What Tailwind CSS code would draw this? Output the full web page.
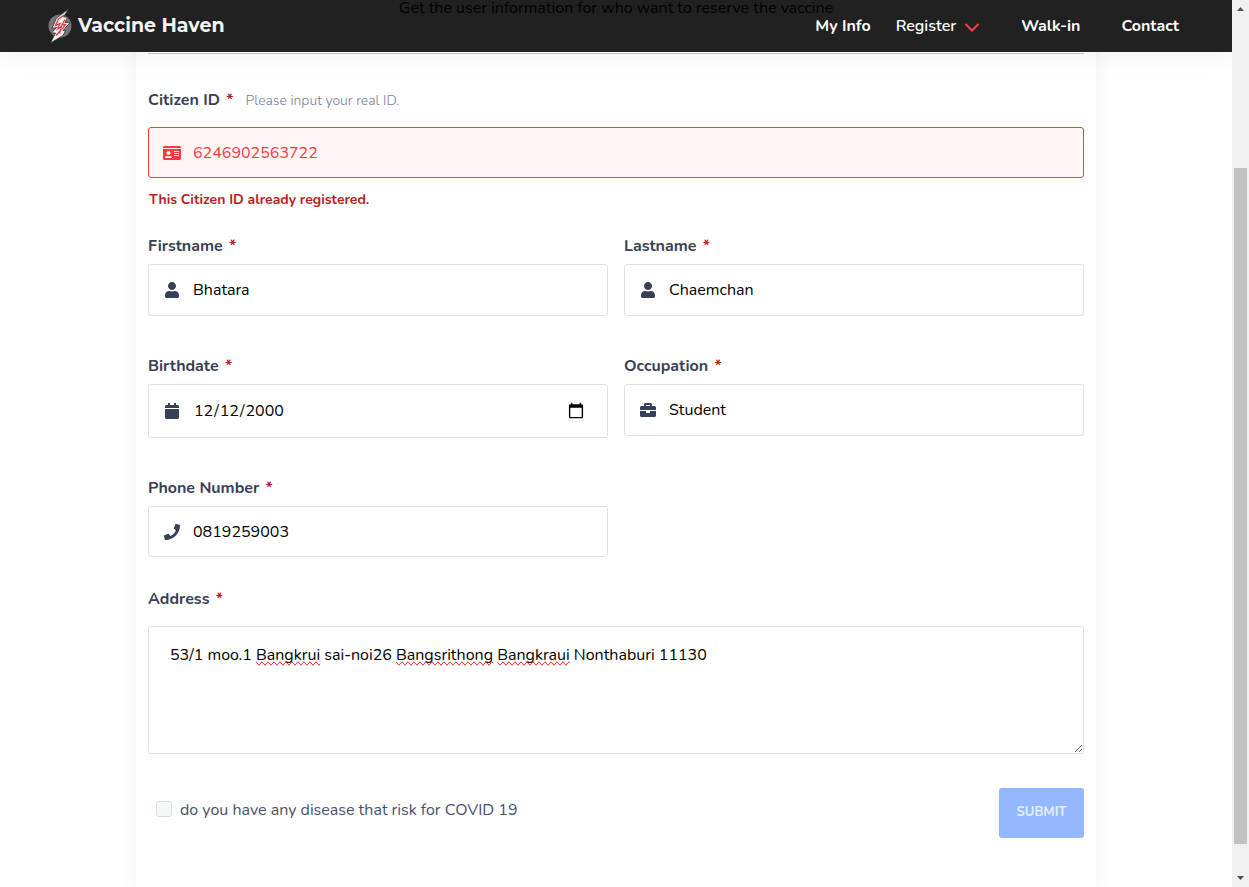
<!DOCTYPE html>
<html lang="en">
<head>
<meta charset="utf-8">
<meta name="viewport" content="width=device-width, initial-scale=1">
<title>Vaccine Haven</title>
<script src="https://cdn.jsdelivr.net/npm/@tailwindcss/browser@4"></script>
</head>
<body class="flex h-screen overflow-hidden bg-white font-[Nunito,'Open_Sans',sans-serif] text-base text-[#374056]">
<div class="relative min-w-0 flex-1 overflow-hidden">
  <header class="absolute inset-x-0 top-0 z-10 flex h-[52px] items-center justify-between bg-black/87 pl-12 pr-[53px] text-white shadow-[0_4px_24px_rgba(0,0,0,0.06)]">
    <a href="#" class="flex items-center gap-1.5 font-[Montserrat,'Open_Sans',sans-serif] text-[19px] font-bold text-[#f3f3f3]">
      <svg class="h-9 w-6" viewBox="0 0 24 36" aria-hidden="true">
        <circle cx="12" cy="18" r="11.5" fill="#777"/>
        <path d="M20.500 1 8.500 10 4 20.500 8.500 19.500 3.500 25 7.500 25 2.500 35 15 27.500 17.500 22.500 15 22.500 22 14.500 17 14.500 19.500 9 15.500 9Z" fill="#f0f0f0" stroke="#333" stroke-width=".8"/>
        <path d="M16 7 10.500 11 7.500 17.500 12 15.500 9.500 21 13.500 18.500 11.500 25.500M17 11.500 14 17 17.500 16.500 14 21.500M8 27.500 12.500 22.500" fill="none" stroke="#e23b48" stroke-width="1.300"/>
      </svg>
      <span>Vaccine Haven</span>
    </a>
    <nav class="flex items-center font-bold" aria-label="Main">
      <a href="#">My Info</a>
      <button type="button" class="ml-[25px] flex items-center gap-2 font-semibold">Register
        <svg class="mt-0.5 h-4 w-4" viewBox="0 0 16 16" fill="none" stroke="#f43f52" stroke-width="2" aria-hidden="true"><path d="M1.500 5 8 11.500 14.500 5"/></svg>
      </button>
      <a href="#" class="ml-[41px]">Walk-in</a>
      <a href="#" class="ml-[41px]">Contact</a>
    </nav>
  </header>
  <main class="mx-auto min-h-screen max-w-[960px] bg-white px-3 shadow-[0_0_20px_rgba(0,0,0,0.06)]">
    <p class="text-center leading-4 text-black">Get the user information for who want to reserve the vaccine</p>
    <hr class="mt-[37px] border-[#ccc]">
    <form class="pt-[34px]">
      <div class="flex items-center">
        <label for="cid" class="font-bold">Citizen ID <span class="ml-0.5 text-[#b91c1c]">*</span></label>
        <span class="ml-3 pt-0.5 text-sm font-light text-[#718096]">Please input your real ID.</span>
      </div>
      <div class="relative mt-[15px]">
        <svg class="absolute left-[15px] top-[18px] h-4 w-[18px]" viewBox="0 0 576 512" fill="#f93b3f" aria-hidden="true"><path d="M528 32H48C21.500 32 0 53.500 0 80v16h576V80c0-26.500-21.500-48-48-48zM0 432c0 26.500 21.500 48 48 48h480c26.500 0 48-21.500 48-48V128H0v304zm352-232c0-4.400 3.600-8 8-8h144c4.400 0 8 3.600 8 8v16c0 4.400-3.600 8-8 8H360c-4.400 0-8-3.600-8-8v-16zm0 64c0-4.400 3.600-8 8-8h144c4.400 0 8 3.600 8 8v16c0 4.400-3.600 8-8 8H360c-4.400 0-8-3.600-8-8v-16zm0 64c0-4.400 3.600-8 8-8h144c4.400 0 8 3.600 8 8v16c0 4.400-3.600 8-8 8H360c-4.400 0-8-3.600-8-8v-16zM176 192c35.300 0 64 28.700 64 64s-28.700 64-64 64-64-28.700-64-64 28.700-64 64-64zM67.100 396.200C75.500 370.500 99.600 352 128 352h8.200c12.300 5.100 25.700 8 39.800 8s27.600-2.900 39.800-8h8.200c28.400 0 52.500 18.500 60.900 44.200 3.200 9.900-5.200 19.800-15.600 19.800H82.700c-10.400 0-18.800-10-15.600-19.800z"/></svg>
        <input id="cid" type="text" value="6246902563722" aria-invalid="true" aria-describedby="cid-error" class="block h-[51px] w-full rounded-[3px] border border-[#f93b3f] bg-[#fff5f5] pl-11 pr-4 text-[#f93b3f]">
      </div>
      <p id="cid-error" class="ml-px mt-3 text-sm font-bold text-[#b91c1c]">This Citizen ID already registered.</p>

      <div class="mt-6 grid grid-cols-2 items-start gap-x-4">
        <div>
          <label for="first" class="block font-bold">Firstname <span class="ml-0.5 text-[#b91c1c]">*</span></label>
          <div class="relative mt-1.5">
            <svg class="absolute left-4 top-[18px] h-4 w-4" viewBox="0 0 448 512" fill="#374056" aria-hidden="true"><path d="M224 256c70.700 0 128-57.300 128-128S294.700 0 224 0 96 57.300 96 128s57.300 128 128 128zm89.600 32h-16.700c-22.200 10.200-46.900 16-72.900 16s-50.600-5.800-72.900-16h-16.700C60.200 288 0 348.200 0 422.400V464c0 26.500 21.500 48 48 48h352c26.500 0 48-21.500 48-48v-41.600c0-74.200-60.200-134.400-134.400-134.400z"/></svg>
            <input id="first" type="text" value="Bhatara" class="block h-[52px] w-full rounded-[3px] border border-[#dfe0e6] bg-white pl-11 pr-4 text-black">
          </div>
        </div>
        <div>
          <label for="last" class="block font-bold">Lastname <span class="ml-0.5 text-[#b91c1c]">*</span></label>
          <div class="relative mt-1.5">
            <svg class="absolute left-4 top-[18px] h-4 w-4" viewBox="0 0 448 512" fill="#374056" aria-hidden="true"><path d="M224 256c70.700 0 128-57.300 128-128S294.700 0 224 0 96 57.300 96 128s57.300 128 128 128zm89.600 32h-16.700c-22.200 10.200-46.900 16-72.900 16s-50.600-5.800-72.900-16h-16.700C60.200 288 0 348.200 0 422.400V464c0 26.500 21.500 48 48 48h352c26.500 0 48-21.500 48-48v-41.600c0-74.200-60.200-134.400-134.400-134.400z"/></svg>
            <input id="last" type="text" value="Chaemchan" class="block h-[52px] w-full rounded-[3px] border border-[#dfe0e6] bg-white pl-11 pr-4 text-black">
          </div>
        </div>
      </div>

      <div class="mt-[38px] grid grid-cols-2 items-start gap-x-4">
        <div>
          <label for="birth" class="block font-bold">Birthdate <span class="ml-0.5 text-[#b91c1c]">*</span></label>
          <div class="relative mt-1.5">
            <svg class="absolute left-4 top-[19px] h-4 w-4" viewBox="0 0 448 512" fill="#374056" aria-hidden="true"><path d="M12 192h424c6.600 0 12 5.400 12 12v260c0 26.500-21.500 48-48 48H48c-26.500 0-48-21.500-48-48V204c0-6.600 5.400-12 12-12zm436-44v-36c0-26.500-21.500-48-48-48h-48V12c0-6.600-5.400-12-12-12h-40c-6.600 0-12 5.400-12 12v52H160V12c0-6.600-5.400-12-12-12h-40c-6.600 0-12 5.400-12 12v52H48C21.500 64 0 85.500 0 112v36c0 6.600 5.400 12 12 12h424c6.600 0 12-5.400 12-12z"/></svg>
            <input id="birth" type="date" value="2000-12-12" class="block h-[54px] w-full rounded-[3px] border border-[#dfe0e6] bg-white pl-11 pr-5 text-black [&::-webkit-calendar-picker-indicator]:h-[18px] [&::-webkit-calendar-picker-indicator]:w-[18px]">
          </div>
        </div>
        <div>
          <label for="job" class="block font-bold">Occupation <span class="ml-0.5 text-[#b91c1c]">*</span></label>
          <div class="relative mt-1.5">
            <svg class="absolute left-4 top-[18px] h-4 w-4" viewBox="0 0 512 512" fill="#374056" aria-hidden="true"><path d="M320 336c0 8.840-7.160 16-16 16h-96c-8.840 0-16-7.160-16-16v-48H0v144c0 25.600 22.400 48 48 48h416c25.600 0 48-22.400 48-48V288H320v48zm144-208h-80V80c0-25.600-22.400-48-48-48H176c-25.600 0-48 22.400-48 48v48H48c-25.600 0-48 22.400-48 48v80h512v-80c0-25.600-22.400-48-48-48zm-144 0H192V96h128v32z"/></svg>
            <input id="job" type="text" value="Student" class="block h-[52px] w-full rounded-[3px] border border-[#dfe0e6] bg-white pl-11 pr-4 text-black">
          </div>
        </div>
      </div>

      <div class="mt-[38px] grid grid-cols-2 gap-x-4">
        <div>
          <label for="phone" class="block font-bold">Phone Number <span class="ml-0.5 text-[#b91c1c]">*</span></label>
          <div class="relative mt-1.5">
            <svg class="absolute left-4 top-[18px] h-4 w-4" viewBox="0 0 512 512" fill="#374056" aria-hidden="true"><path d="M493.400 24.600l-104-24c-11.300-2.600-22.900 3.300-27.500 13.900l-48 112c-4.200 9.800-1.400 21.300 6.900 28l60.600 49.600c-36 76.700-98.900 140.500-177.200 177.200l-49.600-60.600c-6.800-8.300-18.200-11.100-28-6.900l-112 48C3.900 366.500-2 378.100.6 389.400l24 104C27.100 504.200 36.700 512 48 512c256.100 0 464-207.500 464-464 0-11.200-7.700-20.900-18.600-23.400z"/></svg>
            <input id="phone" type="tel" value="0819259003" class="block h-[51px] w-full rounded-[3px] border border-[#dfe0e6] bg-white pl-11 pr-4 text-black">
          </div>
        </div>
      </div>

      <label for="address" class="mt-[30px] block font-bold">Address <span class="ml-0.5 text-[#b91c1c]">*</span></label>
      <div class="relative mt-[15px]">
        <textarea id="address" class="block h-32 w-full resize rounded-[3px] border border-[#dfe0e6] bg-white px-[21px] py-4 text-black">53/1 moo.1 Bangkrui sai-noi26 Bangsrithong Bangkraui Nonthaburi 11130</textarea>
        <div class="pointer-events-none absolute inset-0 border border-transparent px-[21px] py-4 text-transparent" aria-hidden="true">53/1 moo.1 <span class="[text-decoration-line:spelling-error]">Bangkrui</span> sai-noi26 <span class="[text-decoration-line:spelling-error]">Bangsrithong</span> <span class="[text-decoration-line:spelling-error]">Bangkraui</span></div>
      </div>

      <div class="mt-[34px] flex items-start justify-between">
        <label for="risk" class="ml-2 mt-[10px] flex items-start gap-2 text-[#4a5068]">
          <input id="risk" type="checkbox" class="mt-[3px] h-4 w-4 appearance-none rounded-[3px] border border-[#d5dde5] bg-[#f4f8fb]">
          do you have any disease that risk for COVID 19
        </label>
        <button type="submit" disabled class="h-[50px] w-[85px] rounded-[3px] bg-[#94b8ff] text-[13px] font-bold text-[#e6eeff]">SUBMIT</button>
      </div>
    </form>
  </main>
</div>
<!-- Window scrollbar -->
<div class="flex w-[17px] shrink-0 flex-col items-center justify-between bg-[#f0f0f0]" aria-hidden="true">
  <svg class="h-[17px] w-[17px]" viewBox="0 0 17 17" fill="#505050"><path d="M5 11 8.500 7 12 11Z"/></svg>
  <div class="flex w-full flex-1 flex-col px-0.5">
    <div class="flex-[151]"></div>
    <div class="flex-[676] bg-[#c1c1c1]"></div>
    <div class="flex-[26]"></div>
  </div>
  <svg class="h-[17px] w-[17px]" viewBox="0 0 17 17" fill="#505050"><path d="M5 6 8.500 10 12 6Z"/></svg>
</div>
</body>
</html>
